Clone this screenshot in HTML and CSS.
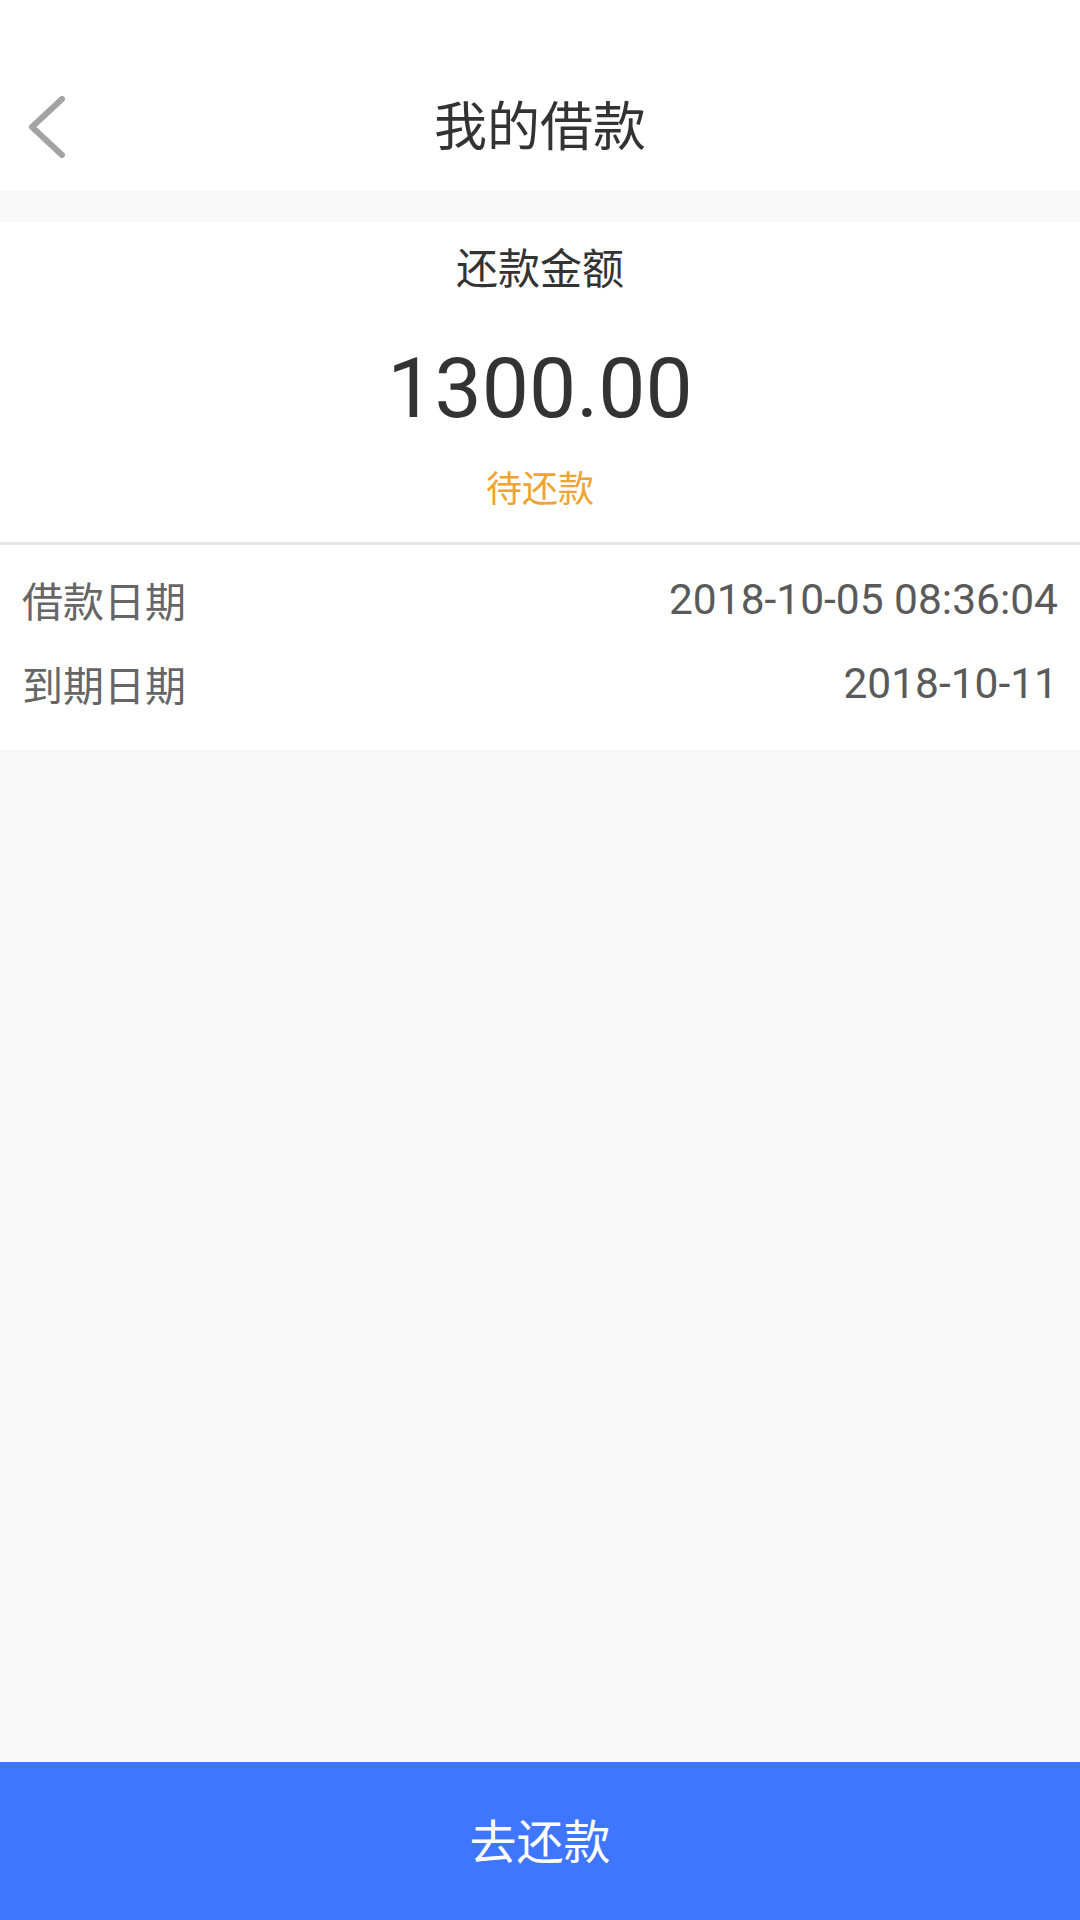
FILE: index.html
```html
<!DOCTYPE html>
<html lang="zh-CN">
<head>
    <meta charset="UTF-8">
    <title>我的借款</title>
    <link rel="stylesheet" href="styles.css">
</head>
<body>

    <div class="header">
        <div class="back">
            <svg width="40" height="64" viewBox="0 0 40 64">
                <polyline points="35,3 5,31 35,59" fill="none" stroke="#a3a3a3" stroke-width="6" stroke-linecap="round" stroke-linejoin="round"/>
            </svg>
        </div>
        <h1 class="title">我的借款</h1>
        <div></div>
    </div>

    <div class="summary">
        <div class="summary-label">还款金额</div>
        <div class="amount">1300.00</div>
        <div class="status">待还款</div>
    </div>

    <div class="info">
        <div class="info-row">
            <span class="info-label">借款日期</span>
            <span class="info-value">2018-10-05 08:36:04</span>
        </div>
        <div class="info-row">
            <span class="info-label">到期日期</span>
            <span class="info-value">2018-10-11</span>
        </div>
    </div>

    <div class="filler"></div>

    <button class="repay-btn">去还款</button>

</body>
</html>
```

FILE: styles.css
```css
* {
    box-sizing: border-box;
}

body {
    margin: 0;
    height: 100vh;
    display: flex;
    flex-direction: column;
    background: #f8f8f8;
    font-family: Roboto, "Noto Sans CJK SC", sans-serif;
    color: #333;
}

.header {
    background: #fff;
    padding-top: 64px;
    height: 191px;
    display: grid;
    grid-template-columns: 1fr auto 1fr;
    align-items: center;
}

.back {
    padding-left: 27px;
    display: flex;
    align-items: center;
}

.title {
    margin: 0;
    font-size: 53px;
    font-weight: normal;
    color: #333;
    line-height: 64px;
}

.summary {
    margin-top: 31px;
    background: #fff;
    padding: 24px 0 32px;
    text-align: center;
    border-bottom: 3px solid #e6e6e6;
}

.summary-label {
    font-size: 42px;
    line-height: 48px;
    color: #333;
}

.amount {
    margin-top: 45px;
    font-size: 84px;
    line-height: 100px;
    color: #333;
}

.status {
    margin-top: 31px;
    font-size: 36px;
    line-height: 40px;
    color: #f0a232;
}

.info {
    background: #fff;
    padding: 12px 22px 25px;
}

.info-row {
    display: flex;
    justify-content: space-between;
    align-items: center;
    height: 84px;
}

.info-label {
    font-size: 41px;
    color: #666;
}

.info-value {
    font-size: 42.5px;
    color: #5a5a5a;
}

.filler {
    flex: 1;
}

.repay-btn {
    height: 158px;
    border: none;
    padding: 0 0 6px;
    background: #3f76ff;
    color: #fff;
    font-family: Roboto, "Noto Sans CJK SC", sans-serif;
    font-size: 47px;
    width: 100%;
    cursor: pointer;
}
```
